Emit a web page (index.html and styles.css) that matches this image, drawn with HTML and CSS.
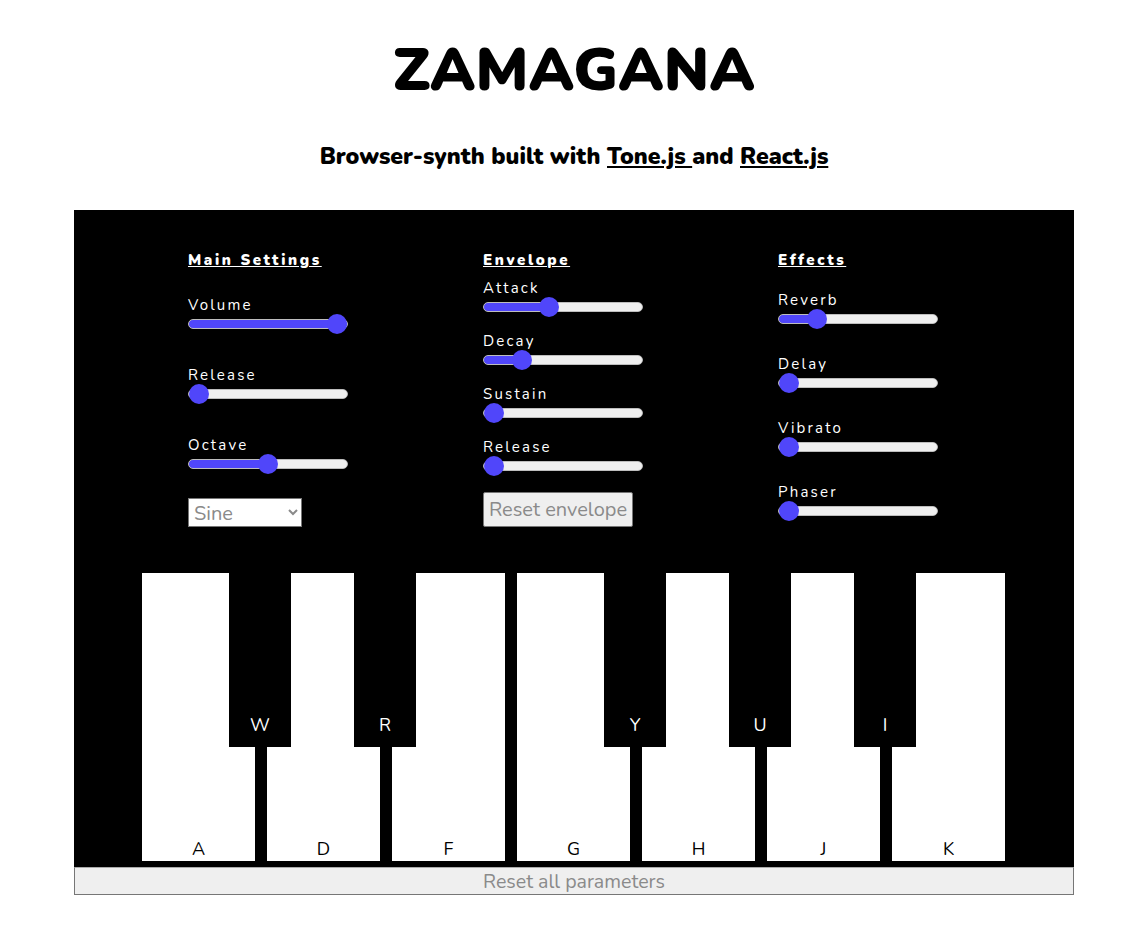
FILE: index.html
```html
<!DOCTYPE html>
<html lang="en">
<head>
<meta charset="utf-8">
<title>Zamagana</title>
<link rel="stylesheet" href="styles.css">
</head>
<body>
<header class="header">
  <h1 class="title">ZAMAGANA</h1>
  <h3 class="subtitle">Browser-synth built with <a class="link" href="#">Tone.js </a>and <a class="link" href="#">React.js</a></h3>
</header>
<main class="synth">
  <section class="controls">
    <div class="col col-main">
      <h4 class="col-title">Main Settings</h4>
      <div class="field">
        <label class="label">Volume</label>
        <input class="slider" type="range" min="0" max="100" value="100" style="--v:100%">
      </div>
      <div class="field">
        <label class="label">Release</label>
        <input class="slider" type="range" min="0" max="100" value="0" style="--v:0%">
      </div>
      <div class="field">
        <label class="label">Octave</label>
        <input class="slider" type="range" min="0" max="100" value="50" style="--v:50%">
      </div>
      <div class="select-wrap">
        <select class="select"><option>Sine</option><option>Square</option><option>Sawtooth</option><option>Triangle</option></select>
      </div>
    </div>
    <div class="col col-env">
      <h4 class="col-title">Envelope</h4>
      <div class="field">
        <label class="label">Attack</label>
        <input class="slider" type="range" min="0" max="100" value="40" style="--v:40%">
      </div>
      <div class="field">
        <label class="label">Decay</label>
        <input class="slider" type="range" min="0" max="100" value="20" style="--v:20%">
      </div>
      <div class="field">
        <label class="label">Sustain</label>
        <input class="slider" type="range" min="0" max="100" value="0" style="--v:0%">
      </div>
      <div class="field">
        <label class="label">Release</label>
        <input class="slider" type="range" min="0" max="100" value="0" style="--v:0%">
      </div>
      <div class="btn-wrap">
        <button class="btn">Reset envelope</button>
      </div>
    </div>
    <div class="col col-fx">
      <h4 class="col-title">Effects</h4>
      <div class="field">
        <label class="label">Reverb</label>
        <input class="slider" type="range" min="0" max="100" value="20" style="--v:20%">
      </div>
      <div class="field">
        <label class="label">Delay</label>
        <input class="slider" type="range" min="0" max="100" value="0" style="--v:0%">
      </div>
      <div class="field">
        <label class="label">Vibrato</label>
        <input class="slider" type="range" min="0" max="100" value="0" style="--v:0%">
      </div>
      <div class="field">
        <label class="label">Phaser</label>
        <input class="slider" type="range" min="0" max="100" value="0" style="--v:0%">
      </div>
    </div>
  </section>
  <section class="keyboard">
    <div class="white-keys">
      <div class="key white"><span>A</span></div>
      <div class="key white"><span>D</span></div>
      <div class="key white"><span>F</span></div>
      <div class="key white"><span>G</span></div>
      <div class="key white"><span>H</span></div>
      <div class="key white"><span>J</span></div>
      <div class="key white"><span>K</span></div>
    </div>
    <div class="key black b1"><span>W</span></div>
    <div class="key black b2"><span>R</span></div>
    <div class="key black b4"><span>Y</span></div>
    <div class="key black b5"><span>U</span></div>
    <div class="key black b6"><span>I</span></div>
  </section>
</main>
<button class="reset-all">Reset all parameters</button>
</body>
</html>
```
FILE: styles.css
```css
* { box-sizing: border-box; }
body {
  margin: 0;
  font-family: "Nunito", "Lato", "Open Sans", sans-serif;
  background: #fff;
  color: #000;
}
.header {
  text-align: center;
  padding-top: 29px;
}
.title {
  margin: 0;
  font-size: 60px;
  line-height: 82px;
  font-weight: 900;
  letter-spacing: 0;
}
.subtitle {
  margin: 33px 0 0;
  font-size: 23px;
  line-height: 26px;
  font-weight: 900;
}
.link { color: #000; text-decoration: underline; }

.synth {
  width: 1000px;
  margin: 40px auto 0;
  background: #000;
  padding: 41px 0 6px;
}
.controls {
  display: grid;
  grid-template-columns: 295px 295px 295px;
  padding-left: 114px;
  height: 322px;
}
.col {
  display: flex;
  flex-direction: column;
}
.col-title {
  margin: 0;
  color: #fff;
  font-size: 15px;
  line-height: 18px;
  font-weight: 900;
  letter-spacing: 2.6px;
  text-decoration: underline;
}
.field {
  display: flex;
  flex-direction: column;
  align-items: flex-start;
}
.label {
  color: #fff;
  font-size: 15px;
  line-height: 18px;
  letter-spacing: 2.2px;
  margin-bottom: 5px;
}
.col-main { gap: 37px; }
.col-main .col-title { margin-bottom: -10px; }
.col-env { gap: 20px; }
.col-env .col-title { margin-bottom: -10px; }
.col-fx { gap: 31px; }
.col-fx .col-title { margin-bottom: -9px; }

.slider {
  -webkit-appearance: none;
  appearance: none;
  margin: 0;
  width: 160px;
  height: 10px;
  border-radius: 5px;
  border: 1px solid #bdbdbd;
  background: linear-gradient(to right, #5046fa 0, #5046fa var(--v), #efefef var(--v), #efefef 100%);
  outline: none;
}
.slider::-webkit-slider-thumb {
  -webkit-appearance: none;
  appearance: none;
  width: 20px;
  height: 20px;
  border-radius: 50%;
  background: #5046fa;
  border: none;
}
.select-wrap { margin-top: -8px; }
.select {
  width: 114px;
  height: 29px;
  font-family: inherit;
  font-size: 20px;
  color: #8a8a8a;
  background: #fff;
  border: 1px solid #767676;
  border-radius: 0;
  padding: 0 1px;
}
.btn-wrap { margin-top: 1px; }
.btn {
  width: 150px;
  height: 35px;
  font-family: inherit;
  font-size: 20px;
  color: #8a8a8a;
  background: #efefef;
  border: 1px solid #767676;
  border-radius: 2px;
  padding: 0;
}

.keyboard {
  position: relative;
  width: 863px;
  margin: 0 0 0 68px;
}
.white-keys {
  display: flex;
  gap: 12px;
}
.key {
  display: flex;
  justify-content: center;
  align-items: flex-end;
  font-size: 18px;
  line-height: 18px;
}
.white {
  width: 113px;
  height: 288px;
  background: #fff;
  color: #000;
  padding-bottom: 3px;
}
.black {
  position: absolute;
  top: 0;
  width: 62px;
  height: 174px;
  background: #000;
  color: #fff;
  padding-bottom: 13px;
}
.b1 { left: 87px; }
.b2 { left: 212px; }
.b4 { left: 462px; }
.b5 { left: 587px; }
.b6 { left: 712px; }

.reset-all {
  display: block;
  width: 1000px;
  height: 28px;
  margin: 0 auto;
  background: #efefef;
  border: 1px solid #767676;
  border-top-color: #aaa;
  color: #8a8a8a;
  font-family: inherit;
  font-size: 19.6px;
  line-height: 24px;
  padding: 2px 0 0;
}
```
